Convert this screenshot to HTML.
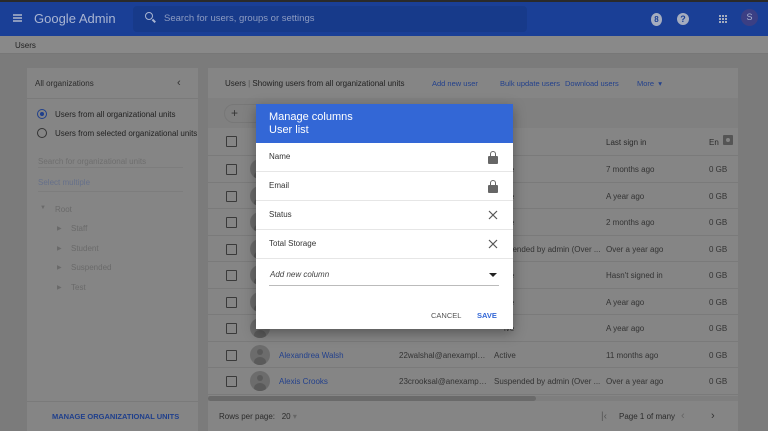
<!DOCTYPE html>
<html><head><meta charset="utf-8"><style>
*{box-sizing:border-box;margin:0;padding:0}
body{width:768px;height:431px;overflow:hidden;background:#7b7b7b;font-family:"Liberation Sans",sans-serif;position:relative;color:#1e1e1e}
.a{position:absolute}
.t{font-size:8px;white-space:nowrap}
.cb{position:absolute;left:18px;width:11px;height:11px;border:1.5px solid #3a3a3a;border-radius:1px}
.av{position:absolute;left:42px;width:20px;height:20px;border-radius:50%;background:#6c6c6c;overflow:hidden}
.av:before{content:"";position:absolute;left:7px;top:4px;width:6px;height:6px;border-radius:50%;background:#5a5a5a}
.av:after{content:"";position:absolute;left:4px;top:12px;width:12px;height:10px;border-radius:50%;background:#5a5a5a}
.row{position:absolute;left:0;width:530px;height:26.5px;border-bottom:1px solid #7a7a7a}
.dr{position:absolute;left:0;width:257px;height:29px;border-bottom:1px solid #e6e6e6}
.dr span{position:absolute;left:13px;top:9px;font-size:8px;color:#333}
.em{overflow:hidden;text-overflow:ellipsis;width:88px}
</style></head><body>
<div class="a" style="left:0;top:0;width:768px;height:2px;background:#2a2a2a"></div>
<div class="a" style="left:0;top:2px;width:768px;height:34px;background:#1a3f96"></div>
<div class="a" style="left:13px;top:14px;width:9px;height:1.5px;background:#8a99bd;box-shadow:0 3px 0 #8a99bd,0 6px 0 #8a99bd"></div>
<div class="a" style="left:34px;top:11px;font-size:13px;color:#a9b5d2">Google Admin</div>
<div class="a" style="left:133px;top:6px;width:394px;height:26px;background:#173a8a;border-radius:4px"></div>
<div class="a" style="left:145px;top:12px;width:8px;height:8px;border:1.5px solid #a9b5d2;border-radius:50%"></div>
<div class="a" style="left:152px;top:20px;width:4px;height:1.5px;background:#a9b5d2;transform:rotate(45deg)"></div>
<div class="a t" style="left:164px;top:13px;font-size:9.5px;color:#8d9cc2">Search for users, groups or settings</div>
<div class="a" style="left:651px;top:13px;width:11px;height:13px;border-radius:50%;background:#a5adbf;font-size:8px;color:#1a3f96;text-align:center;line-height:13px;font-weight:bold">8</div>
<div class="a" style="left:677px;top:13px;width:12px;height:12px;border-radius:50%;background:#a5adbf;font-size:9px;color:#1a3f96;text-align:center;line-height:12px;font-weight:bold">?</div>
<div class="a" style="left:719px;top:15px;width:2px;height:2px;background:#a5adbf;box-shadow:3px 0 #a5adbf,6px 0 #a5adbf,0 3px #a5adbf,3px 3px #a5adbf,6px 3px #a5adbf,0 6px #a5adbf,3px 6px #a5adbf,6px 6px #a5adbf"></div>
<div class="a" style="left:741px;top:9px;width:17px;height:17px;border-radius:50%;background:#3b3f84;color:#a9b5d2;font-size:9px;text-align:center;line-height:17px">S</div>
<div class="a" style="left:0;top:36px;width:768px;height:18px;background:#898989;border-bottom:1px solid #777"></div>
<div class="a t" style="left:15px;top:41px;color:#222">Users</div>

<div class="a" style="left:27px;top:68px;width:171px;height:363px;background:#858585">
 <div class="a t" style="left:8px;top:11px;color:#2b2b2b">All organizations</div>
 <div class="a t" style="left:150px;top:9px;font-size:11px;color:#333">‹</div>
 <div class="a" style="left:0;top:30px;width:171px;height:1px;background:#7a7a7a"></div>
 <div class="a" style="left:10px;top:41px;width:10px;height:10px;border:1.5px solid #1f3f8c;border-radius:50%"></div>
 <div class="a" style="left:13px;top:44px;width:4px;height:4px;background:#1f3f8c;border-radius:50%"></div>
 <div class="a t" style="left:28px;top:42px;color:#222">Users from all organizational units</div>
 <div class="a" style="left:10px;top:60px;width:10px;height:10px;border:1.5px solid #333;border-radius:50%"></div>
 <div class="a t" style="left:28px;top:61px;color:#222">Users from selected organizational units</div>
 <div class="a t" style="left:11px;top:89px;color:#6e6e6e">Search for organizational units</div>
 <div class="a" style="left:11px;top:99px;width:145px;height:1px;background:#7d7d7d"></div>
 <div class="a t" style="left:11px;top:110px;color:#66708a">Select multiple</div>
 <div class="a" style="left:11px;top:123px;width:145px;height:1px;background:#7d7d7d"></div>
 <div class="a t" style="left:13px;top:137px;font-size:6px;color:#6a6a6a">▼</div>
 <div class="a t" style="left:28px;top:137px;color:#6a6a6a">Root</div>
 <div class="a t" style="left:30px;top:157px;font-size:6px;color:#6a6a6a">▶</div><div class="a t" style="left:44px;top:156px;color:#6a6a6a">Staff</div>
 <div class="a t" style="left:30px;top:177px;font-size:6px;color:#6a6a6a">▶</div><div class="a t" style="left:44px;top:176px;color:#6a6a6a">Student</div>
 <div class="a t" style="left:30px;top:196px;font-size:6px;color:#6a6a6a">▶</div><div class="a t" style="left:44px;top:195px;color:#6a6a6a">Suspended</div>
 <div class="a t" style="left:30px;top:216px;font-size:6px;color:#6a6a6a">▶</div><div class="a t" style="left:44px;top:215px;color:#6a6a6a">Test</div>
 <div class="a" style="left:0;top:333px;width:171px;height:1px;background:#7a7a7a"></div>
 <div class="a t" style="left:25px;top:344px;color:#1f3f8c;font-weight:bold;font-size:7.5px">MANAGE ORGANIZATIONAL UNITS</div>
</div>

<div class="a" style="left:208px;top:68px;width:530px;height:363px;background:#858585">
 <div class="a t" style="left:17px;top:11px;color:#222">Users <span style="color:#555">|</span> Showing users from all organizational units</div>
 <div class="a t" style="left:224px;top:11px;color:#23418c;font-size:7.5px">Add new user</div>
 <div class="a t" style="left:292px;top:11px;color:#23418c;font-size:7.5px">Bulk update users</div>
 <div class="a t" style="left:357px;top:11px;color:#23418c;font-size:7.5px">Download users</div>
 <div class="a t" style="left:429px;top:11px;color:#23418c;font-size:7.5px">More &nbsp;▾</div>
 <div class="a" style="left:0;top:30px;width:530px;height:30px;background:#808080"></div>
 <div class="a" style="left:16px;top:36px;width:40px;height:19px;border:1px solid #777;border-radius:10px"></div>
 <div class="a t" style="left:23px;top:38px;font-size:12px;color:#333">+</div>
 <div class="a" style="left:0;top:60px;width:530px;height:28px;border-bottom:1px solid #7a7a7a"></div>
 <div class="cb" style="top:68px"></div>
 <div class="a t" style="left:398px;top:70px;color:#2b2b2b">Last sign in</div>
 <div class="a t" style="left:501px;top:70px;color:#2b2b2b">En</div>
 <div class="a" style="left:515px;top:67px;width:10px;height:10px;background:#555;border-radius:1px"></div>
 <div class="a" style="left:518px;top:70px;width:4px;height:4px;background:#858585;border-radius:50%"></div>

 <div class="row" style="top:88px"><div class="cb" style="top:8px"></div><div class="av" style="top:3px"></div><div class="a t" style="left:398px;top:9px;color:#333">7 months ago</div><div class="a t" style="left:501px;top:9px;color:#333">0 GB</div><div class="a t" style="left:296px;top:9px;color:#333">ive</div></div>
 <div class="row" style="top:114.5px"><div class="cb" style="top:8px"></div><div class="av" style="top:3px"></div><div class="a t" style="left:398px;top:9px;color:#333">A year ago</div><div class="a t" style="left:501px;top:9px;color:#333">0 GB</div><div class="a t" style="left:296px;top:9px;color:#333">ive</div></div>
 <div class="row" style="top:141px"><div class="cb" style="top:8px"></div><div class="av" style="top:3px"></div><div class="a t" style="left:398px;top:9px;color:#333">2 months ago</div><div class="a t" style="left:501px;top:9px;color:#333">0 GB</div><div class="a t" style="left:296px;top:9px;color:#333">ive</div></div>
 <div class="row" style="top:167.5px"><div class="cb" style="top:8px"></div><div class="av" style="top:3px"></div><div class="a t" style="left:398px;top:9px;color:#333">Over a year ago</div><div class="a t" style="left:501px;top:9px;color:#333">0 GB</div><div class="a t" style="left:296px;top:9px;color:#333">spended by admin (Over ...</div></div>
 <div class="row" style="top:194px"><div class="cb" style="top:8px"></div><div class="av" style="top:3px"></div><div class="a t" style="left:398px;top:9px;color:#333">Hasn't signed in</div><div class="a t" style="left:501px;top:9px;color:#333">0 GB</div><div class="a t" style="left:296px;top:9px;color:#333">ive</div></div>
 <div class="row" style="top:220.5px"><div class="cb" style="top:8px"></div><div class="av" style="top:3px"></div><div class="a t" style="left:398px;top:9px;color:#333">A year ago</div><div class="a t" style="left:501px;top:9px;color:#333">0 GB</div><div class="a t" style="left:296px;top:9px;color:#333">ive</div></div>
 <div class="row" style="top:247px"><div class="cb" style="top:8px"></div><div class="av" style="top:3px"></div><div class="a t" style="left:398px;top:9px;color:#333">A year ago</div><div class="a t" style="left:501px;top:9px;color:#333">0 GB</div><div class="a t" style="left:296px;top:9px;color:#333">ive</div></div>
 <div class="row" style="top:273.5px"><div class="cb" style="top:8px"></div><div class="av" style="top:3px"></div><div class="a t" style="left:71px;top:9px;color:#23418c">Alexandrea Walsh</div><div class="a t em" style="left:191px;top:9px;color:#333">22walshal@anexamplesch...</div><div class="a t" style="left:286px;top:9px;color:#333">Active</div><div class="a t" style="left:398px;top:9px;color:#333">11 months ago</div><div class="a t" style="left:501px;top:9px;color:#333">0 GB</div></div>
 <div class="row" style="top:300px"><div class="cb" style="top:8px"></div><div class="av" style="top:3px"></div><div class="a t" style="left:71px;top:9px;color:#23418c">Alexis Crooks</div><div class="a t em" style="left:191px;top:9px;color:#333">23crooksal@anexamplesch...</div><div class="a t" style="left:286px;top:9px;color:#333">Suspended by admin (Over ...</div><div class="a t" style="left:398px;top:9px;color:#333">Over a year ago</div><div class="a t" style="left:501px;top:9px;color:#333">0 GB</div></div>
 <div class="a" style="left:0;top:328px;width:530px;height:5px;background:#7e7e7e"></div>
 <div class="a" style="left:0;top:328px;width:328px;height:5px;background:#6a6a6a;border-radius:3px"></div>
 <div class="a t" style="left:11px;top:344px;color:#2b2b2b">Rows per page: &nbsp;&nbsp;20 <span style="color:#666">▾</span></div>
 <div class="a t" style="left:393px;top:343px;color:#555;font-size:10px">|‹</div>
 <div class="a t" style="left:411px;top:344px;color:#2b2b2b">Page 1 of many</div>
 <div class="a t" style="left:473px;top:342px;color:#666;font-size:11px">‹</div>
 <div class="a t" style="left:503px;top:342px;color:#333;font-size:11px">›</div>
</div>

<div class="a" style="left:256px;top:104px;width:257px;height:225px;background:#fff;box-shadow:0 4px 12px rgba(0,0,0,.35)">
 <div class="a" style="left:0;top:0;width:257px;height:39px;background:#3367d6"></div>
 <div class="a t" style="left:13px;top:7px;font-size:11px;color:#fff">Manage columns</div>
 <div class="a t" style="left:13px;top:20px;font-size:11px;color:#fff">User list</div>
 <div class="dr" style="top:39px"><span>Name</span></div>
 <div class="dr" style="top:68px"><span>Email</span></div>
 <div class="dr" style="top:97px"><span>Status</span></div>
 <div class="dr" style="top:126px"><span>Total Storage</span></div>
 <div class="a" style="left:234px;top:47px;width:6px;height:6px;border:1.5px solid #666;border-bottom:none;border-radius:3px 3px 0 0"></div>
 <div class="a" style="left:232px;top:52px;width:10px;height:8px;background:#666;border-radius:1px"></div>
 <div class="a" style="left:234px;top:76px;width:6px;height:6px;border:1.5px solid #666;border-bottom:none;border-radius:3px 3px 0 0"></div>
 <div class="a" style="left:232px;top:81px;width:10px;height:8px;background:#666;border-radius:1px"></div>
 <svg class="a" style="left:232px;top:106px" width="10" height="10"><path d="M1 1L9 9M9 1L1 9" stroke="#555" stroke-width="1.2"/></svg>
 <svg class="a" style="left:232px;top:135px" width="10" height="10"><path d="M1 1L9 9M9 1L1 9" stroke="#555" stroke-width="1.2"/></svg>
 <div class="a t" style="left:14px;top:166px;color:#444;font-style:italic">Add new column</div>
 <div class="a" style="left:233px;top:169px;width:0;height:0;border-left:4px solid transparent;border-right:4px solid transparent;border-top:4px solid #222"></div>
 <div class="a" style="left:13px;top:181px;width:230px;height:1px;background:#bbb"></div>
 <div class="a t" style="left:175px;top:207px;color:#555;font-size:7.5px">CANCEL</div>
 <div class="a t" style="left:221px;top:207px;color:#3367d6;font-size:7.5px;font-weight:bold">SAVE</div>
</div>
</body></html>
